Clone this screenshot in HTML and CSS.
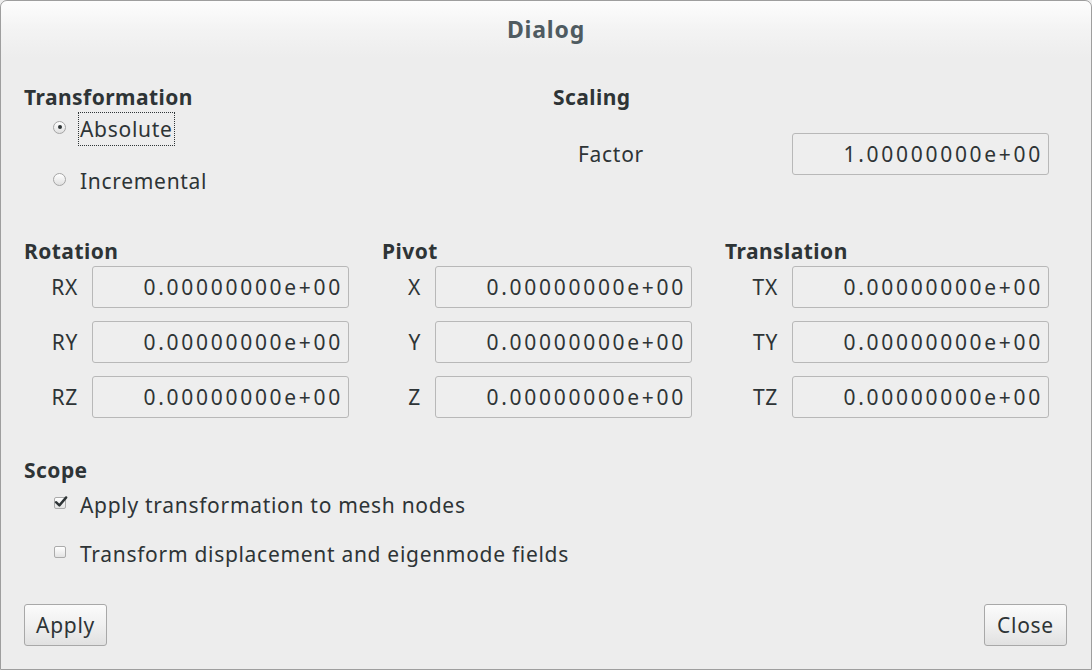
FILE: index.html
```html
<!DOCTYPE html>
<html>
<head>
<meta charset="utf-8">
<title>Dialog</title>
<link rel="stylesheet" href="styles.css">
</head>
<body>
<div class="window">
  <div class="titlebar"><span class="title">Dialog</span></div>
  <div class="content">
    <div class="top">
      <div class="group transform">
        <div class="heading">Transformation</div>
        <div class="opt-row first">
          <span class="radio checked"></span>
          <span class="opt-label focus">Absolute</span>
        </div>
        <div class="opt-row second">
          <span class="radio"></span>
          <span class="opt-label">Incremental</span>
        </div>
      </div>
      <div class="group scaling">
        <div class="heading">Scaling</div>
        <div class="factor-row">
          <span class="factor-label">Factor</span>
          <div class="entry">1.00000000e+00</div>
        </div>
      </div>
    </div>

    <div class="coords">
      <div class="col col-rot">
        <div class="heading">Rotation</div>
        <div class="rows">
          <span class="lbl">RX</span><div class="entry">0.00000000e+00</div>
          <span class="lbl">RY</span><div class="entry">0.00000000e+00</div>
          <span class="lbl">RZ</span><div class="entry">0.00000000e+00</div>
        </div>
      </div>
      <div class="col col-piv">
        <div class="heading">Pivot</div>
        <div class="rows">
          <span class="lbl">X</span><div class="entry">0.00000000e+00</div>
          <span class="lbl">Y</span><div class="entry">0.00000000e+00</div>
          <span class="lbl">Z</span><div class="entry">0.00000000e+00</div>
        </div>
      </div>
      <div class="col col-tra">
        <div class="heading">Translation</div>
        <div class="rows">
          <span class="lbl">TX</span><div class="entry">0.00000000e+00</div>
          <span class="lbl">TY</span><div class="entry">0.00000000e+00</div>
          <span class="lbl">TZ</span><div class="entry">0.00000000e+00</div>
        </div>
      </div>
    </div>

    <div class="scope">
      <div class="heading">Scope</div>
      <div class="opt-row check-first">
        <span class="check checked"><svg viewBox="0 0 16 16" width="16" height="16"><path d="M3 8.2 L6.4 11.4 L13.2 3.4" fill="none" stroke="#2e3436" stroke-width="2.4" stroke-linecap="round" stroke-linejoin="round"/></svg></span>
        <span class="opt-label">Apply transformation to mesh nodes</span>
      </div>
      <div class="opt-row check-second">
        <span class="check"></span>
        <span class="opt-label">Transform displacement and eigenmode fields</span>
      </div>
    </div>

    <div class="buttons">
      <button class="btn">Apply</button>
      <button class="btn">Close</button>
    </div>
  </div>
</div>
</body>
</html>
```

FILE: styles.css
```css
html, body {
  margin: 0;
  padding: 0;
  background: #ededed;
}

body {
  font-family: "Noto Sans", "Open Sans", sans-serif;
  font-size: 21px;
  color: #2e3436;
}

.window {
  width: 1092px;
  height: 670px;
  box-sizing: border-box;
  border: 1px solid #9e9e9e;
  border-radius: 7px 7px 0 0;
  background: #ededed;
  overflow: hidden;
}

.titlebar {
  height: 57px;
  display: flex;
  align-items: center;
  justify-content: center;
  background: linear-gradient(to bottom, #fdfdfd 0%, #f3f3f3 50%, #ededed 100%);
  border-radius: 6px 6px 0 0;
}

.title {
  font-size: 23px;
  font-weight: 700;
  color: #4f5b61;
  letter-spacing: 0.8px;
  margin-top: -2px;
}

.content {
  padding: 27px 24px 0 23px;
  display: flex;
  flex-direction: column;
}

.heading {
  font-weight: 700;
  line-height: 24px;
  height: 24px;
  letter-spacing: 0.45px;
}

/* top section */
.top {
  display: flex;
}

.transform {
  width: 529px;
}

.opt-row {
  display: flex;
  align-items: center;
  height: 34px;
  padding-left: 29px;
}

.opt-row.first { margin-top: 3px; }
.opt-row.second { margin-top: 18px; }

.radio {
  width: 13px;
  height: 13px;
  box-sizing: border-box;
  border-radius: 50%;
  border: 1px solid #a5a5a5;
  background: linear-gradient(to bottom, #ffffff, #e0e0e0);
  margin-right: 12px;
  margin-bottom: 4px;
  display: flex;
  align-items: center;
  justify-content: center;
  flex: none;
}

.radio.checked::after {
  content: "";
  width: 4px;
  height: 4px;
  border-radius: 50%;
  background: #2e3436;
}

.opt-label {
  border: 1px dotted transparent;
  padding: 0 1px;
  line-height: 32px;
  letter-spacing: 0.7px;
}

.opt-label.focus {
  border-color: #2e3436;
}

.factor-row {
  display: flex;
  align-items: center;
  margin-top: 24px;
}

.factor-label {
  width: 239px;
  box-sizing: border-box;
  padding-left: 25px;
  letter-spacing: 0.7px;
}

.entry {
  width: 257px;
  height: 42px;
  box-sizing: border-box;
  border: 1px solid #b8b8b8;
  border-radius: 3px;
  background: #eeeeee;
  text-align: right;
  padding-right: 5px;
  line-height: 40px;
  letter-spacing: 2.7px;
  white-space: nowrap;
}

/* coordinates */
.coords {
  display: grid;
  grid-template-columns: 325px 310px 324px;
  column-gap: 33px;
  margin-top: 41px;
}

.rows {
  display: grid;
  row-gap: 13px;
  margin-top: 3px;
  align-items: center;
}

.col-rot .rows { grid-template-columns: 68px 257px; }
.col-piv .rows { grid-template-columns: 53px 257px; }
.col-tra .rows { grid-template-columns: 67px 257px; }

.lbl {
  text-align: right;
  padding-right: 14px;
  letter-spacing: 0.7px;
}

/* scope */
.scope {
  margin-top: 40px;
}

.opt-row.check-first { margin-top: 6px; }
.opt-row.check-second { margin-top: 15px; }

.check {
  position: relative;
  width: 12px;
  height: 12px;
  box-sizing: border-box;
  border: 1px solid #ababab;
  border-radius: 2px;
  background: linear-gradient(to bottom, #ffffff, #e3e3e3);
  margin-left: 1px;
  margin-right: 12px;
  margin-bottom: 5px;
  flex: none;
}

.check svg {
  position: absolute;
  left: -2px;
  top: -4px;
}

/* buttons */
.buttons {
  display: flex;
  justify-content: space-between;
  margin-top: 33px;
}

.btn {
  width: 83px;
  height: 42px;
  box-sizing: border-box;
  border: 1px solid #a8a8a8;
  border-radius: 3px;
  background: linear-gradient(to bottom, #fbfbfb 0%, #f0f0f0 50%, #e1e1e1 100%);
  font-family: "Noto Sans", "Open Sans", sans-serif;
  font-size: 21px;
  color: #2e3436;
  padding: 0;
  letter-spacing: 0.7px;
}
```
